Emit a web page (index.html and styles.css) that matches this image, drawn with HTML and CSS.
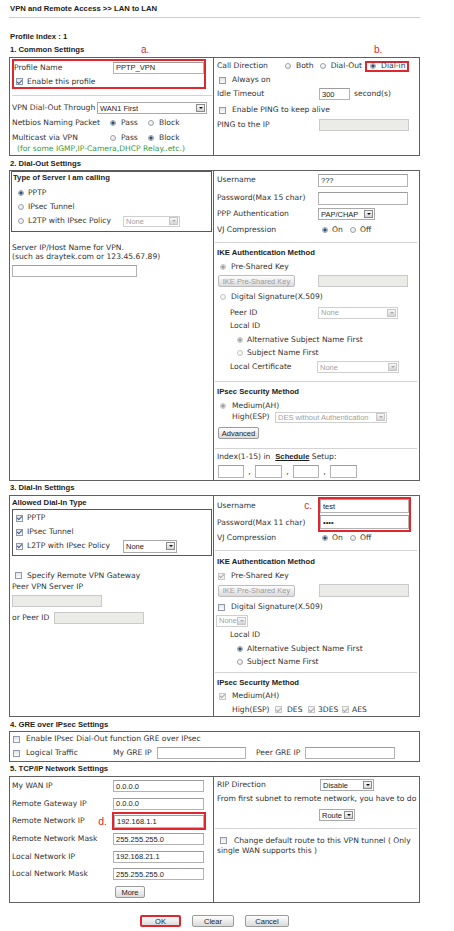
FILE: index.html
```html
<!DOCTYPE html>
<html lang="en">
<head>
<meta charset="utf-8">
<title>VPN and Remote Access - LAN to LAN</title>
<link rel="stylesheet" href="styles.css">
</head>
<body>
<div class="page">
  <div class="title">VPN and Remote Access &gt;&gt; LAN to LAN</div>
  <div class="pindex">Profile Index : 1</div>

  <div class="sec-head mb1"><span class="w131">1. Common Settings</span><span class="mark w12">a.</span><span class="mark ml221">b.</span></div>
  <div class="box cols">
    <div class="col pb1">
      <div class="redbox rb-a">
        <div class="row h13"><span class="w99">Profile Name</span><input class="inp w91" value="PPTP_VPN"></div>
        <div class="row h11 mt2"><i class="cb on ml2"></i><span class="ml4">Enable this profile</span></div>
      </div>
      <div class="sep sep-l"></div>
      <div class="row h14 mt5 pl2"><span class="w85">VPN Dial-Out Through</span><span class="sel w110"><span>WAN1 First</span><i class="sb"></i></span></div>
      <div class="row h16 pl2"><span class="w98">Netbios Naming Packet</span><span class="opt w38"><i class="rd on"></i><span class="ml5">Pass</span></span><span class="opt"><i class="rd"></i><span class="ml5">Block</span></span></div>
      <div class="row h13 pl2"><span class="w98">Multicast via VPN</span><span class="opt w38"><i class="rd"></i><span class="ml5">Pass</span></span><span class="opt"><i class="rd on"></i><span class="ml5">Block</span></span></div>
      <div class="note">(for some IGMP,IP-Camera,DHCP Relay..etc.)</div>
    </div>
    <div class="col right">
      <div class="row h14 mt1"><span class="w68">Call Direction</span><span class="opt mr6"><i class="rd"></i><span class="ml5">Both</span></span><span class="opt"><i class="rd"></i><span class="ml5">Dial-Out</span></span><span class="redbox rb-b"><i class="rd on"></i><span class="ml5">Dial-in</span></span></div>
      <div class="row h14"><i class="cb ml2"></i><span class="ml6">Always on</span></div>
      <div class="row h14"><span class="w102">Idle Timeout</span><input class="inp w31" value="300"><span class="ml4">second(s)</span></div>
      <div class="row h16 pt2"><i class="cb ml2"></i><span class="ml6">Enable PING to keep alive</span></div>
      <div class="row h16"><span class="w102">PING to the IP</span><input class="inp w90" disabled></div>
    </div>
  </div>

  <div class="sec-head mt1">2. Dial-Out Settings</div>
  <div class="box cols">
    <div class="col">
      <div class="ibox ib-server">
        <div class="sub pl1 mb2">Type of Server I am calling</div>
        <div class="row h14"><i class="rd on ml6"></i><span class="ml4">PPTP</span></div>
        <div class="row h14"><i class="rd ml6"></i><span class="ml4">IPsec Tunnel</span></div>
        <div class="row h14"><i class="rd ml6"></i><span class="ml4 w95">L2TP with IPsec Policy</span><span class="sel dis sh11 w57"><span>None</span><i class="sb"></i></span></div>
      </div>
      <div class="hint">Server IP/Host Name for VPN.<br>(such as draytek.com or 123.45.67.89)</div>
      <input class="inp blk w125 ml2 mt4">
    </div>
    <div class="col right pb2">
      <div class="row h18"><span class="w101">Username</span><input class="inp ih13 w90" value="???"></div>
      <div class="row h18"><span class="w101">Password(Max 15 char)</span><input class="inp ih13 w90" type="password"></div>
      <div class="row h14"><span class="w101">PPP Authentication</span><span class="sel w57"><span>PAP/CHAP</span><i class="sb"></i></span></div>
      <div class="row h18"><span class="w105">VJ Compression</span><span class="opt w28"><i class="rd on"></i><span class="ml4">On</span></span><span class="opt"><i class="rd"></i><span class="ml4">Off</span></span></div>
      <div class="sep sep-r mt3"></div>
      <div class="sub mt4">IKE Authentication Method</div>
      <div class="row h14 mt1"><i class="rd dis on ml3"></i><span class="ml5">Pre-Shared Key</span></div>
      <div class="row h14"><span class="w101"><button class="btn dis ml1 w77" disabled>IKE Pre-Shared Key</button></span><input class="inp w90" disabled></div>
      <div class="row h18"><i class="rd dis ml3"></i><span class="ml5">Digital Signature(X.509)</span></div>
      <div class="row h13"><span class="w101 pl13">Peer ID</span><span class="sel dis w80"><span>None</span><i class="sb"></i></span></div>
      <div class="row h14 pl13"><span>Local ID</span></div>
      <div class="row h13"><i class="rd dis on ml20"></i><span class="ml4">Alternative Subject Name First</span></div>
      <div class="row h14"><i class="rd dis ml20"></i><span class="ml4">Subject Name First</span></div>
      <div class="row h14"><span class="w100 pl13">Local Certificate</span><span class="sel dis w82"><span>None</span><i class="sb"></i></span></div>
      <div class="sep sep-r mt7"></div>
      <div class="sub mt4">IPsec Security Method</div>
      <div class="row h11 mt2"><i class="rd dis on ml3"></i><span class="ml6">Medium(AH)</span></div>
      <div class="row h12"><span class="w58 pl15">High(ESP)</span><span class="sel dis sh11 w112"><span>DES without Authentication</span><i class="sb"></i></span></div>
      <div class="row h12 mt4"><button class="btn ml1 w41">Advanced</button></div>
      <div class="sep sep-r mt9"></div>
      <div class="row h12 mt2"><span>Index(1-15) in&nbsp; <b class="sched">Schedule</b> Setup:</span></div>
      <div class="row h13 mt2"><input class="inp ih13 w26 ml1"><span class="comma">,</span><input class="inp ih13 w27"><span class="comma">,</span><input class="inp ih13 w26"><span class="comma">,</span><input class="inp ih13 w27"></div>
    </div>
  </div>

  <div class="sec-head mb1">3. Dial-In Settings</div>
  <div class="box cols">
    <div class="col">
      <div class="sub mt1 pl2">Allowed Dial-In Type</div>
      <div class="ibox ib-allow">
        <div class="row h14"><i class="cb on ml3"></i><span class="ml4">PPTP</span></div>
        <div class="row h14"><i class="cb on ml3"></i><span class="ml4">IPsec Tunnel</span></div>
        <div class="row h14"><i class="cb on ml3"></i><span class="ml4 w96">L2TP with IPsec Policy</span><span class="sel sh13 w54"><span>None</span><i class="sb"></i></span></div>
      </div>
      <div class="row h11 mt14"><i class="cb ml5"></i><span class="ml5">Specify Remote VPN Gateway</span></div>
      <div class="row h12 pl2"><span>Peer VPN Server IP</span></div>
      <input class="inp blk w90 ml2 mt2" disabled>
      <div class="row h14 mt4 pl2"><span class="w42">or Peer ID</span><input class="inp w90" disabled></div>
    </div>
    <div class="col right">
      <div class="cred mt1">
        <div class="credlbl">
          <div class="row h17"><span>Username</span><span class="mark mark-c">c.</span></div>
          <div class="row h17"><span>Password(Max 11 char)</span></div>
        </div>
        <div class="redbox rb-c">
          <input class="inp blk ih14 w89" value="test">
          <input class="inp blk ih14 w89 mt2" type="password" value="test">
        </div>
      </div>
      <div class="row h12"><span class="w105">VJ Compression</span><span class="opt w28"><i class="rd on"></i><span class="ml4">On</span></span><span class="opt"><i class="rd"></i><span class="ml4">Off</span></span></div>
      <div class="sep sep-r mt6"></div>
      <div class="sub mt5">IKE Authentication Method</div>
      <div class="row h14 mt1"><i class="cb dis on ml1"></i><span class="ml6">Pre-Shared Key</span></div>
      <div class="row h15"><span class="w102"><button class="btn dis ml1 w77" disabled>IKE Pre-Shared Key</button></span><input class="inp ih13 w90" disabled></div>
      <div class="row h14 mt2"><i class="cb ml1"></i><span class="ml6">Digital Signature(X.509)</span></div>
      <div class="row h13"><span class="sel dis w32 mln1"><span>None</span><i class="sb"></i></span></div>
      <div class="row h15 pl13"><span>Local ID</span></div>
      <div class="row h13"><i class="rd on ml20"></i><span class="ml4">Alternative Subject Name First</span></div>
      <div class="row h14"><i class="rd ml20"></i><span class="ml4">Subject Name First</span></div>
      <div class="sep sep-r mt3"></div>
      <div class="sub mt4">IPsec Security Method</div>
      <div class="row h14"><i class="cb dis on ml2"></i><span class="ml6">Medium(AH)</span></div>
      <div class="row h13"><span class="w58 pl15">High(ESP)</span><span class="opt w33"><i class="cb dis on"></i><span class="ml5">DES</span></span><span class="opt w34"><i class="cb dis on"></i><span class="ml3">3DES</span></span><span class="opt"><i class="cb dis on"></i><span class="ml3">AES</span></span></div>
    </div>
  </div>

  <div class="sec-head mt1">4. GRE over IPsec Settings</div>
  <div class="box pb1">
    <div class="row h14"><i class="cb ml3"></i><span class="ml6">Enable IPsec Dial-Out function GRE over IPsec</span></div>
    <div class="row h14"><i class="cb ml3"></i><span class="ml6 w87">Logical Traffic</span><span class="w44">My GRE IP</span><input class="inp w89"><span class="ml10 w49">Peer GRE IP</span><input class="inp w90"></div>
  </div>

  <div class="sec-head mb1">5. TCP/IP Network Settings</div>
  <div class="box cols">
    <div class="col pl2 pb4">
      <div class="row h18"><span class="w101">My WAN IP</span><input class="inp w91" value="0.0.0.0"></div>
      <div class="row h17"><span class="w101">Remote Gateway IP</span><input class="inp w91" value="0.0.0.0"></div>
      <div class="row h18"><span class="w100 lblmark"><span>Remote Network IP</span><span class="mark mark-d">d.</span></span><span class="redbox rb-d"><input class="inp ih13 w90" value="192.168.1.1"></span></div>
      <div class="row h18"><span class="w101">Remote Network Mask</span><input class="inp w91" value="255.255.255.0"></div>
      <div class="row h17"><span class="w101">Local Network IP</span><input class="inp w91" value="192.168.21.1"></div>
      <div class="row h18"><span class="w101">Local Network Mask</span><input class="inp w91" value="255.255.255.0"></div>
      <button class="btn blk w30 mt3 ml103">More</button>
    </div>
    <div class="col right">
      <div class="row h16"><span class="w103">RIP Direction</span><span class="sel w54"><span>Disable</span><i class="sb"></i></span></div>
      <div class="para mt1">From first subnet to remote network, you have to do</div>
      <div class="row h12 mt6"><span class="sel w36 ml102"><span>Route</span><i class="sb"></i></span></div>
      <div class="sep sep-r mt7"></div>
      <div class="para2 mt7"><i class="cb ilcb"></i>Change default route to this VPN tunnel ( Only single WAN supports this )</div>
    </div>
  </div>

  <div class="actions"><button class="btn bok">OK</button><button class="btn w42">Clear</button><button class="btn w44">Cancel</button></div>
</div>
</body>
</html>
```

FILE: styles.css
```css
* { box-sizing: border-box; margin: 0; padding: 0; }
body {
  background: #fff;
  color: #333;
  font-family: "DejaVu Sans", Verdana, sans-serif;
  font-size: 7.6px;
  line-height: 1;
}
.page { width: 420px; padding-left: 9px; }

.title, .pindex, .sec-head, .sub, .sched {
  font-family: "Liberation Sans", Arial, sans-serif;
  font-weight: bold;
  font-size: 7.7px;
  color: #1c1c1c;
}
.title { height: 18px; line-height: 17px; border-bottom: 1px solid #cbcbcb; padding-left: 1px; }
.pindex { margin-top: 13px; height: 12px; line-height: 12px; padding-left: 1px; }
.sec-head { height: 13px; padding-left: 1px; display: flex; align-items: center; white-space: nowrap; }
.sub { height: 12px; line-height: 12px; white-space: nowrap; }
.sched { text-decoration: underline; }

.mark {
  color: #e1262d;
  font-family: "Liberation Sans", Arial, sans-serif;
  font-weight: normal;
  font-size: 10px;
}
.mark-c { margin-left: auto; margin-right: 6px; }
.mark-d { margin-left: auto; margin-right: 5px; font-size: 10.5px; }

.box { width: 411px; border: 1px solid #606060; }
.cols { display: grid; grid-template-columns: 203px 206px; }
.right { border-left: 1px solid #606060; padding: 0 2px 0 3px; }

.row { display: flex; align-items: center; white-space: nowrap; }
.row > * { flex: none; }
.opt { display: flex; align-items: center; }
.lblmark { display: flex; align-items: center; }

.redbox { border: 2px solid #e1262d; }
.rb-a { display: block; width: 194px; height: 30px; margin: 1px 0 0 2px; }
.rb-b { display: flex; align-items: center; height: 11px; margin-left: 3px; padding: 0 1px 0 3px; }
.rb-c { width: 93px; height: 35px; }
.rb-d { display: flex; align-items: center; width: 94px; height: 18px; }
.cred { display: flex; }
.credlbl { width: 101px; }

.sep { height: 1px; background: #d3d3d3; }
.sep-l { width: 200px; margin: 6px 0 0 2px; }
.sep-r { width: 202px; margin-left: -2px; }

.ibox { border: 1px solid #585858; }
.ib-server { width: 201px; margin-left: 1px; padding-bottom: 3px; }
.ib-allow { width: 200px; margin-left: 2px; padding: 1px 0 2px; }

.note { height: 10px; line-height: 10px; padding-left: 7px; color: #3a9a3a; white-space: nowrap; }
.hint { margin-top: 11px; padding-left: 2px; line-height: 9px; white-space: nowrap; }
.para { line-height: 9px; }
.para2 { line-height: 10px; }
.comma { width: 11px; text-align: center; }

/* form controls */
.inp {
  display: inline-block;
  height: 12px;
  border: 1px solid #b3b3b3;
  border-top-color: #9d9d9d;
  background: #fff;
  font: 7.5px "Liberation Sans", Arial, sans-serif;
  color: #222;
  padding: 0 2px;
  outline: none;
}
.inp:disabled { background: #ebebe7; border-color: #cacaca; }
.ih13 { height: 13px; }
.ih14 { height: 14px; }
.blk { display: block; }

.sel {
  display: inline-flex;
  align-items: center;
  justify-content: space-between;
  height: 12px;
  border: 1px solid #a9a9a9;
  background: #fff;
  padding: 0 1px 0 2px;
  font: 7.5px "Liberation Sans", Arial, sans-serif;
  color: #1e1e1e;
  overflow: hidden;
}
.sh11 { height: 11px; }
.sh13 { height: 13px; }
.sb {
  width: 9px;
  height: 8px;
  border: 1px solid #8a8a8a;
  background: linear-gradient(#f8f8f8, #d3d3d3);
  display: flex;
  align-items: center;
  justify-content: center;
  flex: none;
}
.sb::after {
  content: "";
  border-style: solid;
  border-width: 2.5px 2.5px 0;
  border-color: #111 transparent transparent;
}
.sel.dis { color: #a2a2a2; border-color: #cfcfcf; }
.sel.dis .sb { border-color: #c6c6c6; }
.sel.dis .sb::after { border-top-color: #a9a9a9; }

.rd {
  display: inline-block;
  width: 6px;
  height: 6px;
  border-radius: 50%;
  border: 1px solid #9ea3aa;
  background: radial-gradient(circle at 35% 35%, #fff, #d9d9d9);
  flex: none;
}
.rd.on { background: radial-gradient(circle, #2c4f7c 0 1.4px, #e6e6e6 1.8px); }
.rd.dis { border-color: #c4c4c4; background: radial-gradient(circle at 35% 35%, #fff, #e6e6e6); }
.rd.dis.on { background: radial-gradient(circle, #9d9d9d 0 1.4px, #eeeeee 1.8px); }

.cb {
  display: inline-flex;
  align-items: center;
  justify-content: center;
  width: 7px;
  height: 7px;
  border: 1px solid #8f9aad;
  background: linear-gradient(#e4e4e4, #fbfbfb);
  flex: none;
}
.cb.on::after {
  content: "";
  width: 2px;
  height: 4px;
  border: solid #3a5f95;
  border-width: 0 1px 1px 0;
  transform: rotate(45deg);
  margin-top: -1px;
}
.cb.dis { border-color: #c6c6c6; background: #f2f2f2; }
.cb.dis.on::after { border-color: #a8a8a8; }
.ilcb { vertical-align: -1px; margin: 0 7px 0 3px; }

.btn {
  height: 12px;
  border: 1px solid #9b9b9b;
  border-radius: 2px;
  background: linear-gradient(#fdfdfd, #dadada);
  font: 7.5px "Liberation Sans", Arial, sans-serif;
  color: #1e1e1e;
  padding: 0;
}
.btn.dis { color: #9c9c9c; border-color: #bdbdbd; }
.bok { width: 41px; border: 2px solid #e1262d; }
.actions { width: 411px; display: flex; justify-content: center; gap: 11px; margin-top: 12px; }

/* spacing utilities */
.mt1 { margin-top: 1px; } .mt2 { margin-top: 2px; } .mt3 { margin-top: 3px; } .mt4 { margin-top: 4px; }
.mt5 { margin-top: 5px; } .mt6 { margin-top: 6px; } .mt7 { margin-top: 7px; } .mt9 { margin-top: 9px; }
.mt14 { margin-top: 14px; }
.mb1 { margin-bottom: 1px; } .mb2 { margin-bottom: 2px; }
.ml1 { margin-left: 1px; } .ml2 { margin-left: 2px; } .ml3 { margin-left: 3px; } .ml4 { margin-left: 4px; }
.ml5 { margin-left: 5px; } .ml6 { margin-left: 6px; } .ml10 { margin-left: 10px; } .ml20 { margin-left: 20px; }
.ml102 { margin-left: 102px; } .ml103 { margin-left: 103px; } .ml221 { margin-left: 221px; }
.mln1 { margin-left: -1px; }
.mr6 { margin-right: 6px; }
.pl1 { padding-left: 1px; } .pl2 { padding-left: 2px; } .pl13 { padding-left: 13px; } .pl15 { padding-left: 15px; }
.pt2 { padding-top: 2px; }
.pb1 { padding-bottom: 1px; } .pb2 { padding-bottom: 2px; } .pb4 { padding-bottom: 4px; }

.h11 { height: 11px; } .h12 { height: 12px; } .h13 { height: 13px; } .h14 { height: 14px; }
.h15 { height: 15px; } .h16 { height: 16px; } .h17 { height: 17px; } .h18 { height: 18px; }

.w12 { width: 12px; } .w26 { width: 26px; } .w27 { width: 27px; } .w28 { width: 28px; }
.w30 { width: 30px; } .w31 { width: 31px; } .w32 { width: 32px; } .w33 { width: 33px; }
.w34 { width: 34px; } .w36 { width: 36px; } .w38 { width: 38px; } .w41 { width: 41px; }
.w42 { width: 42px; } .w44 { width: 44px; } .w49 { width: 49px; } .w54 { width: 54px; }
.w57 { width: 57px; } .w58 { width: 58px; } .w68 { width: 68px; } .w77 { width: 77px; }
.w80 { width: 80px; } .w82 { width: 82px; } .w85 { width: 85px; } .w87 { width: 87px; }
.w89 { width: 89px; } .w90 { width: 90px; } .w91 { width: 91px; } .w95 { width: 95px; }
.w96 { width: 96px; } .w98 { width: 98px; } .w99 { width: 99px; } .w100 { width: 100px; }
.w101 { width: 101px; } .w102 { width: 102px; } .w103 { width: 103px; } .w105 { width: 105px; }
.w110 { width: 110px; } .w112 { width: 112px; } .w125 { width: 125px; } .w131 { width: 131px; }
```
